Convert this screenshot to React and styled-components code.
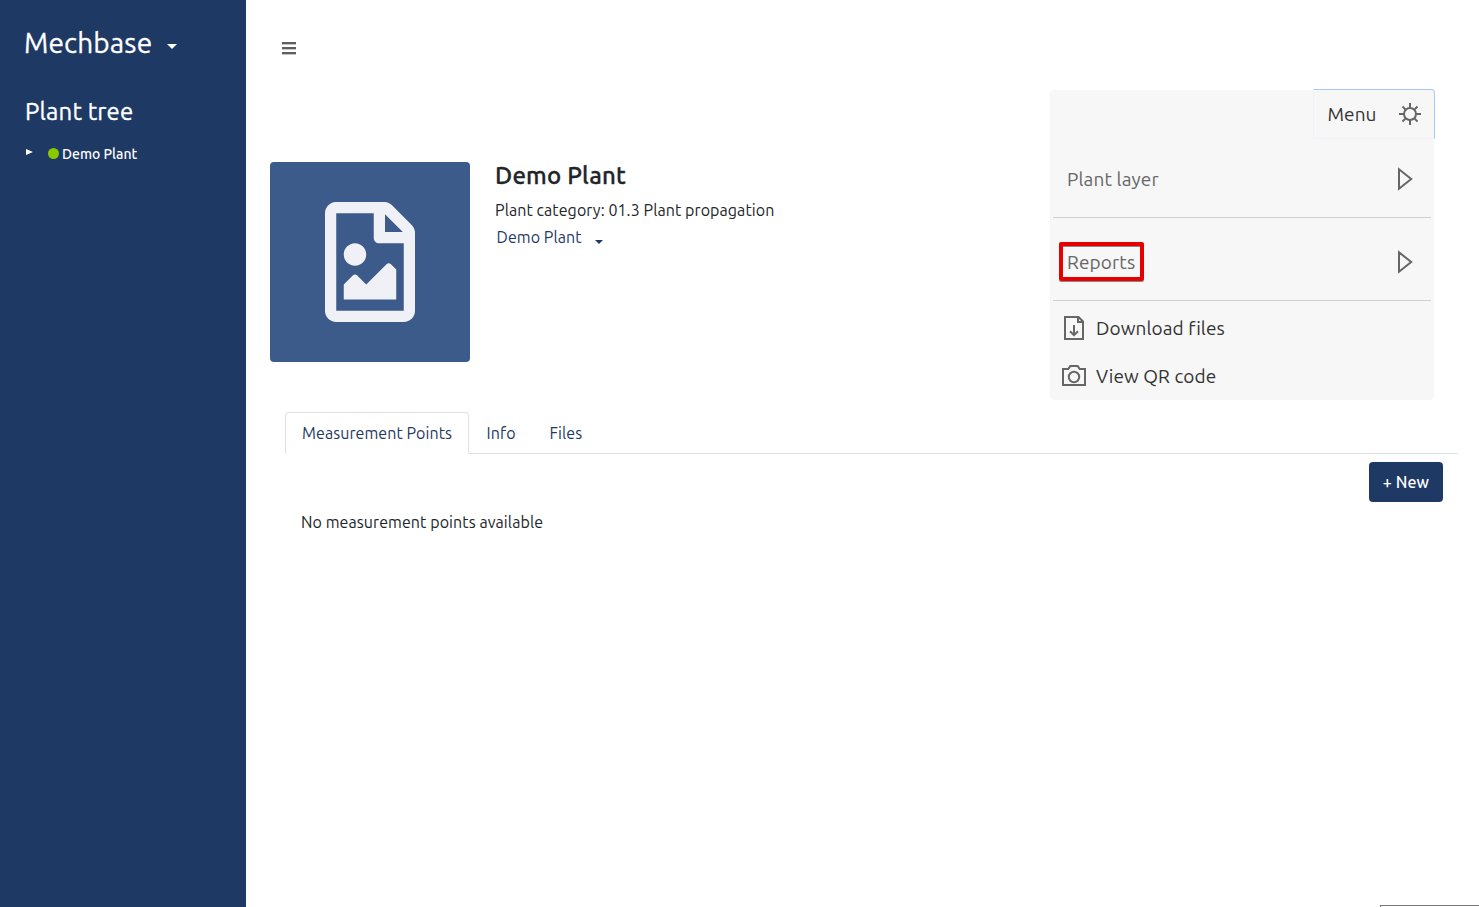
import React from "react";
import styled, { createGlobalStyle } from "styled-components";
import { FaRegFileImage } from "react-icons/fa";

const GlobalStyle = createGlobalStyle`
  *, *::before, *::after { box-sizing: border-box; }
  body {
    margin: 0;
    background: #fff;
    color: #212529;
    font-family: Ubuntu, "Open Sans", "Noto Sans", sans-serif;
    font-size: 16px;
    line-height: 24px;
    letter-spacing: 0.08px;
    overflow: hidden;
  }
  button { font: inherit; letter-spacing: inherit; margin: 0; cursor: pointer; }
  svg { display: block; flex: none; }
`;

const Page = styled.div`
  display: flex;
  height: 100vh;
`;

const Sidebar = styled.aside`
  flex: none;
  width: 246px;
  padding: 22px 24px;
  background: #1e3964;
  color: #fff;
`;

const Brand = styled.div`
  display: flex;
  align-items: center;
  gap: 15px;
  height: 42px;
  font-size: 28px;
  letter-spacing: 0.13px;
  -webkit-text-stroke: 0.3px currentColor;
`;

const Caret = styled.span`
  width: 0;
  height: 0;
  border: solid transparent;
  border-width: ${({ $size }) => `${$size}px ${$size}px 0`};
  border-top-color: currentColor;
  margin-top: ${({ $drop }) => $drop}px;
`;

const TreeTitle = styled.h2`
  margin: 30px 0 0 1px;
  font-size: 24px;
  font-weight: 400;
  line-height: 36px;
  letter-spacing: 0.18px;
  -webkit-text-stroke: 0.35px currentColor;
`;

const TreeNode = styled.div`
  display: flex;
  align-items: center;
  height: 20px;
  margin-top: 14px;
  padding-left: 2px;
  font-size: 14px;
  font-weight: 500;
  letter-spacing: 0;
`;

const Expander = styled.span`
  width: 0;
  height: 0;
  margin: 0 15px 4px 0;
  border: solid transparent;
  border-width: 3px 0 3px 7px;
  border-left-color: #fff;
`;

const StatusDot = styled.span`
  width: 11px;
  height: 11px;
  margin: 0 3px 1px 0;
  border-radius: 50%;
  background: #8cc800;
`;

const Main = styled.main`
  flex: 1;
  display: flex;
  flex-direction: column;
  padding: 42px 21px 0 24px;
`;

const TopBar = styled.header`
  height: 48px;
  padding-left: 12px;
`;

const Burger = styled.div`
  display: grid;
  gap: 3px;
  width: 14px;
  span {
    height: 2px;
    background: #5f5f5f;
    box-shadow: 0 1px 0 #c4c4c4;
  }
`;

const Overview = styled.section`
  display: flex;
  align-items: flex-start;
  height: 310px;
  padding-right: 24px;
`;

const Thumbnail = styled.div`
  display: grid;
  place-items: center;
  width: 200px;
  height: 200px;
  margin-top: 72px;
  border-radius: 4px;
  background: #3c5a8a;
  color: #f0f1f6;
`;

const Details = styled.div`
  flex: 1;
  margin: 71px 0 0 25px;
`;

const Title = styled.h1`
  margin: 0;
  font-size: 24px;
  font-weight: 500;
  line-height: 30px;
  letter-spacing: 0.2px;
  -webkit-text-stroke: 0.3px currentColor;
`;

const Category = styled.p`
  margin: 7px 0 0;
`;

const PlantSelect = styled.div`
  display: flex;
  align-items: center;
  gap: 13px;
  margin: 3px 0 0 1.5px;
  color: #1e3964;
`;

const Panel = styled.nav`
  width: 384px;
  height: 310px;
  border-radius: 4px;
  background: #f7f7f7;
  color: #333;
  font-size: 19px;
  letter-spacing: 0.08px;
`;

const PanelHeader = styled.div`
  display: flex;
  justify-content: flex-end;
  height: 48px;
`;

const MenuButton = styled.button`
  display: flex;
  align-items: center;
  justify-content: space-between;
  width: 122px;
  height: 50px;
  margin: -1px -1px 0 0;
  padding: 0 13px 1px 13.5px;
  border: 1px solid #f1f2f9;
  border-top-color: #a8c7fa;
  border-right-color: #a8c7fa;
  border-top-right-radius: 4px;
  background: transparent;
  color: inherit;
`;

const MenuGroup = styled.div`
  display: flex;
  align-items: center;
  justify-content: space-between;
  height: ${({ $height }) => $height}px;
  margin: 0 3px;
  padding: ${({ $offset }) => $offset}px 18px 0 6px;
  border-bottom: 1px solid #cfcfcf;
  color: #666;
  letter-spacing: 0.12px;
`;

const GroupLabel = styled.span`
  padding-left: 8px;
`;

const HighlightedLabel = styled.span`
  width: 85px;
  height: 39px;
  margin-bottom: 1px;
  border: 4px solid #e60000;
  border-radius: 2px;
  padding-left: 4px;
  line-height: 33px;
  box-shadow: inset 0 1px 0 #8a8a8a, 0 1px 0 #8a8a8a;
`;

const ActionList = styled.div`
  padding: 3px 12px 0;
`;

const Action = styled.div`
  display: flex;
  align-items: center;
  gap: 10px;
  height: 48px;
`;

const LineIcon = styled.svg`
  fill: none;
  stroke: #666;
  stroke-width: 2;
`;

const Tabs = styled.div`
  display: flex;
  height: 42px;
  margin: 12px 0 0 15px;
  border-bottom: 1px solid #dee2e6;
`;

const Tab = styled.div`
  height: 42px;
  padding: 8px 16px;
  border: 1px solid transparent;
  border-radius: 4px 4px 0 0;
  color: #1e3964;
  white-space: nowrap;
  ${({ $active }) => $active && `
    width: 184px;
    margin-right: 0.6px;
    border-color: #dee2e6 #dee2e6 #fff;
    background: #fff;
  `}
`;

const TabBody = styled.section`
  display: flex;
  flex-direction: column;
  padding: 8px 15px 0 31px;
`;

const NewButton = styled.button`
  align-self: flex-end;
  width: 74px;
  height: 40px;
  padding: 0;
  border: 0;
  border-radius: 4px;
  background: #1e3964;
  color: #fff;
  font-weight: 500;
`;

const EmptyMessage = styled.p`
  margin: 8px 0 0;
`;

const StatusBubble = styled.div`
  position: fixed;
  right: 0;
  bottom: 0;
  width: 99px;
  height: 2px;
  border: solid #767676;
  border-width: 1px 0 0 1px;
`;

const SunIcon = () => (
  <LineIcon width="22" height="22" viewBox="0 0 22 22">
    <circle cx="11" cy="11" r="6" />
    <path d="M11 0v5M11 17v5M0 11h5M17 11h5M3.5 3.5l3.4 3.4M15.1 15.1l3.4 3.4M18.5 3.5l-3.4 3.4M6.9 15.1l-3.4 3.4" />
  </LineIcon>
);

const ArrowIcon = () => (
  <LineIcon width="16" height="24" viewBox="0 0 16 24">
    <path d="M2 2.3v19.4L14.2 12z" />
  </LineIcon>
);

const DownloadIcon = () => (
  <LineIcon width="24" height="24" viewBox="0 0 24 24">
    <path d="M3 1h13.5L21 5.5V23H3zM16 1v5h5M12 9v10M8 15.2l4 4 4-4" />
  </LineIcon>
);

const CameraIcon = () => (
  <LineIcon width="24" height="24" viewBox="0 0 24 24">
    <path d="M1 5h5.3l2-2.9h7.4l2 2.9H23v16H1z" />
    <circle cx="12" cy="13" r="5.2" />
  </LineIcon>
);

export default function App() {
  return (
    <Page>
      <GlobalStyle />
      <Sidebar>
        <Brand>Mechbase <Caret $size={5} $drop={6} /></Brand>
        <TreeTitle>Plant tree</TreeTitle>
        <TreeNode><Expander /><StatusDot />Demo Plant</TreeNode>
      </Sidebar>
      <Main>
        <TopBar><Burger><span /><span /><span /></Burger></TopBar>
        <Overview>
          <Thumbnail><FaRegFileImage size={120} /></Thumbnail>
          <Details>
            <Title>Demo Plant</Title>
            <Category>Plant category: 01.3 Plant propagation</Category>
            <PlantSelect>Demo Plant <Caret $size={4.5} $drop={10} /></PlantSelect>
          </Details>
          <Panel>
            <PanelHeader>
              <MenuButton>Menu <SunIcon /></MenuButton>
            </PanelHeader>
            <MenuGroup $height={80} $offset={3}>
              <GroupLabel>Plant layer</GroupLabel><ArrowIcon />
            </MenuGroup>
            <MenuGroup $height={83} $offset={6}>
              <HighlightedLabel>Reports</HighlightedLabel><ArrowIcon />
            </MenuGroup>
            <ActionList>
              <Action><DownloadIcon />Download files</Action>
              <Action><CameraIcon />View QR code</Action>
            </ActionList>
          </Panel>
        </Overview>
        <Tabs>
          <Tab $active>Measurement Points</Tab>
          <Tab>Info</Tab>
          <Tab>Files</Tab>
        </Tabs>
        <TabBody>
          <NewButton>+ New</NewButton>
          <EmptyMessage>No measurement points available</EmptyMessage>
        </TabBody>
      </Main>
      <StatusBubble />
    </Page>
  );
}
